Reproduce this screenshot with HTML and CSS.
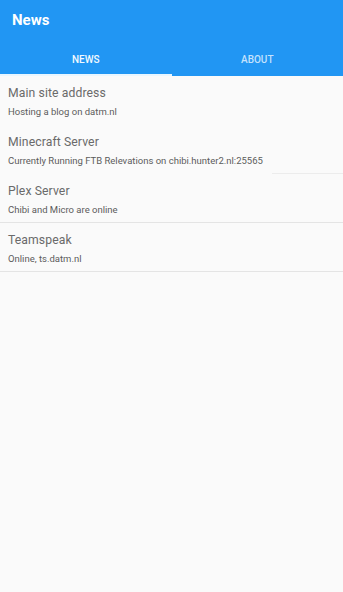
FILE: index.html
```html
<!DOCTYPE html>
<html>
<head>
<meta charset="utf-8">
<link rel="stylesheet" href="styles.css">
</head>
<body>
<header class="appbar">
  <div class="toolbar">News</div>
  <nav class="tabs">
    <div class="tab active">NEWS</div>
    <div class="tab">ABOUT</div>
  </nav>
</header>
<main class="list">
  <div class="item">
    <div class="title">Main site address</div>
    <div class="sub">Hosting a blog on datm.nl</div>
  </div>
  <div class="item partial">
    <div class="title">Minecraft Server</div>
    <div class="sub">Currently Running FTB Relevations on chibi.hunter2.nl:25565</div>
  </div>
  <div class="item divided">
    <div class="title">Plex Server</div>
    <div class="sub">Chibi and Micro are online</div>
  </div>
  <div class="item divided">
    <div class="title">Teamspeak</div>
    <div class="sub">Online, ts.datm.nl</div>
  </div>
</main>
</body>
</html>
```

FILE: styles.css
```css
html, body {
  margin: 0;
  padding: 0;
  background: #fafafa;
  font-family: Roboto, "Noto Sans", sans-serif;
}
body {
  width: 343px;
  height: 592px;
  overflow: hidden;
}
.appbar {
  background: #2196f3;
  color: #fff;
}
.toolbar {
  height: 42px;
  display: flex;
  align-items: center;
  padding: 0 12px;
  font-size: 15px;
  font-weight: 700;
  box-sizing: border-box;
  padding-bottom: 2px;
}
.tabs {
  display: flex;
  height: 34px;
}
.tab {
  flex: 1;
  display: flex;
  align-items: center;
  justify-content: center;
  font-size: 10px;
  font-weight: 500;
  color: rgba(225, 242, 255, 0.85);
  box-sizing: border-box;
  border-bottom: 2px solid transparent;
  padding-top: 2px;
}
.tab.active {
  color: #f2faff;
  border-bottom-color: #e8f6ff;
}
.list {
  display: flex;
  flex-direction: column;
}
.item {
  height: 49px;
  box-sizing: border-box;
  padding: 9px 8px 0 8px;
  display: flex;
  flex-direction: column;
}
.item.divided {
  border-bottom: 1px solid #e4e4e4;
}
.item.partial::after {
  content: "";
  display: block;
  margin-top: auto;
  margin-left: 264px;
  margin-right: -8px;
  height: 1px;
  background: #ececec;
}
.title {
  font-size: 12.2px;
  line-height: 17px;
  color: #6a6a6a;
  letter-spacing: 0.1px;
}
.sub {
  font-size: 9.5px;
  line-height: 14px;
  margin-top: 3px;
  color: #5c5c5c;
}
```
